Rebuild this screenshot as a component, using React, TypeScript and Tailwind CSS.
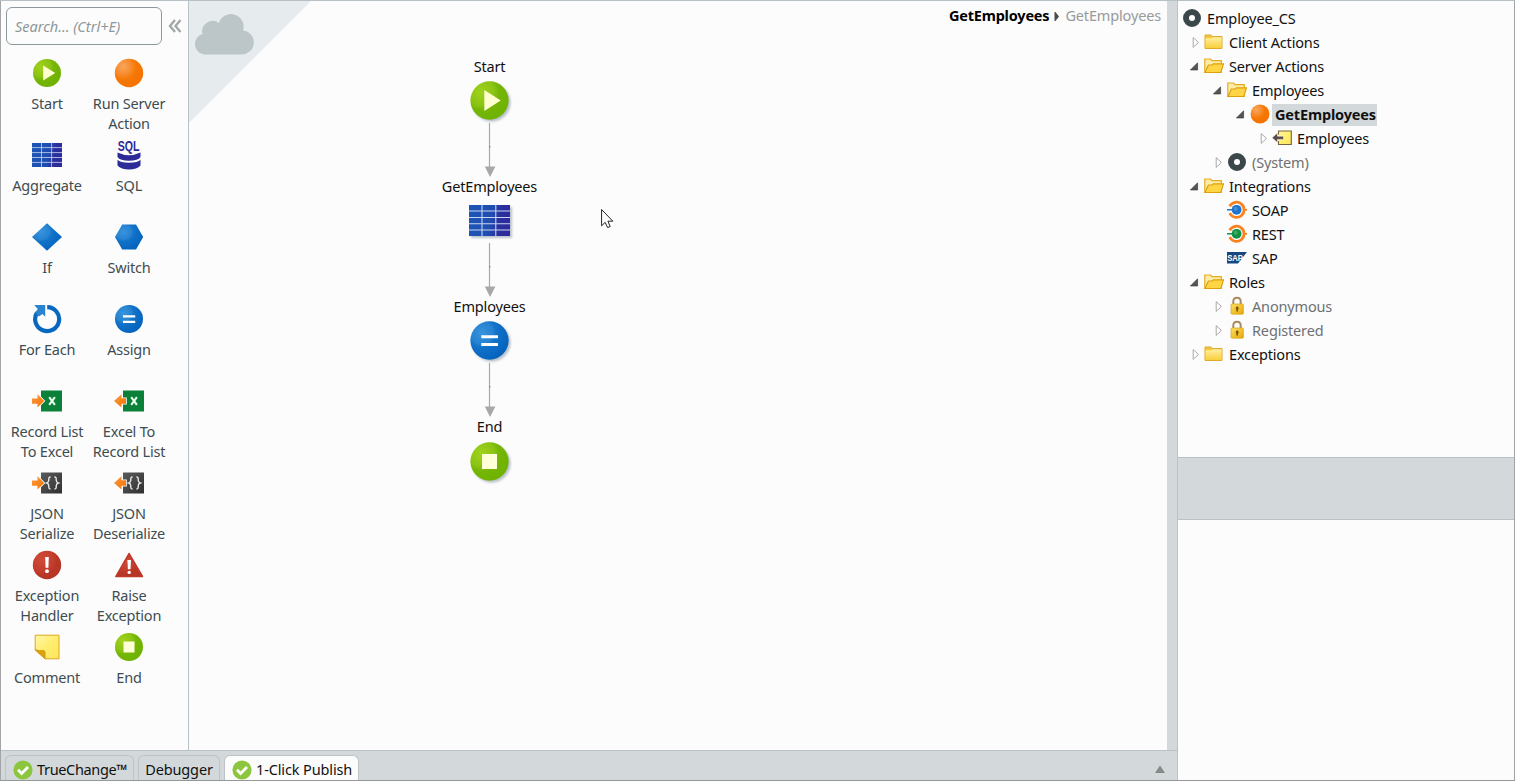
import React from "react";

type IconProps = { size?: number };

function Gradients() {
  return (
    <svg width="0" height="0" className="absolute">
      <defs>
        <radialGradient id="green" cx="0.28" cy="0.28" r="0.8">
          <stop offset="0" stopColor="#9fd21c" />
          <stop offset="0.42" stopColor="#8cc413" />
          <stop offset="0.6" stopColor="#74b505" />
          <stop offset="1" stopColor="#6fb200" />
        </radialGradient>
        <radialGradient id="orange" cx="0.3" cy="0.28" r="0.75">
          <stop offset="0" stopColor="#f9a55c" />
          <stop offset="0.35" stopColor="#f88d30" />
          <stop offset="0.62" stopColor="#f67703" />
          <stop offset="1" stopColor="#f57300" />
        </radialGradient>
        <radialGradient id="blue" cx="0.3" cy="0.3" r="0.75">
          <stop offset="0" stopColor="#3a93dc" />
          <stop offset="0.38" stopColor="#2583d2" />
          <stop offset="0.5" stopColor="#1272c8" />
          <stop offset="1" stopColor="#0463bd" />
        </radialGradient>
        <radialGradient id="red" cx="0.3" cy="0.3" r="0.8">
          <stop offset="0" stopColor="#cf4a39" />
          <stop offset="0.5" stopColor="#c43e2e" />
          <stop offset="0.7" stopColor="#b83626" />
          <stop offset="1" stopColor="#b53425" />
        </radialGradient>
        <linearGradient id="table" x1="0" y1="0" x2="1" y2="0.15">
          <stop offset="0" stopColor="#1b57b8" />
          <stop offset="0.6" stopColor="#1f4cb0" />
          <stop offset="0.8" stopColor="#2b2f9e" />
          <stop offset="1" stopColor="#2d2b9b" />
        </linearGradient>
        <linearGradient id="arrow" x1="0" y1="0" x2="1" y2="1">
          <stop offset="0" stopColor="#fb9a42" />
          <stop offset="1" stopColor="#f57200" />
        </linearGradient>
        <linearGradient id="json" x1="0" y1="0" x2="1" y2="1">
          <stop offset="0" stopColor="#5b5b5b" />
          <stop offset="1" stopColor="#303030" />
        </linearGradient>
        <linearGradient id="note" x1="0" y1="0" x2="1" y2="1">
          <stop offset="0" stopColor="#fff6a8" />
          <stop offset="0.5" stopColor="#ffee6e" />
          <stop offset="1" stopColor="#ffe45c" />
        </linearGradient>
        <linearGradient id="folder" x1="0" y1="0" x2="0" y2="1">
          <stop offset="0" stopColor="#fff0a0" />
          <stop offset="1" stopColor="#f9cf3c" />
        </linearGradient>
        <linearGradient id="lock" x1="0" y1="0" x2="1" y2="1">
          <stop offset="0" stopColor="#fde063" />
          <stop offset="1" stopColor="#e5a800" />
        </linearGradient>
      </defs>
    </svg>
  );
}

function StartIcon({ size = 30 }: IconProps) {
  return (
    <svg width={size} height={size} viewBox="0 0 30 30">
      <circle cx="15" cy="15" r="14" fill="url(#green)" />
      <path d="M11.2 7.4V22.6L23.2 15Z" fill="#ffffd0" />
    </svg>
  );
}

function EndIcon({ size = 30 }: IconProps) {
  return (
    <svg width={size} height={size} viewBox="0 0 30 30">
      <circle cx="15" cy="15" r="14" fill="url(#green)" />
      <rect x="9.5" y="9.5" width="11" height="11" fill="#ffffd8" />
    </svg>
  );
}

function BallIcon({ size = 30 }: IconProps) {
  return (
    <svg width={size} height={size} viewBox="0 0 30 30">
      <circle cx="15" cy="15" r="14.2" fill="url(#orange)" />
    </svg>
  );
}

function AssignIcon({ size = 30 }: IconProps) {
  return (
    <svg width={size} height={size} viewBox="0 0 30 30">
      <circle cx="15" cy="15" r="14" fill="url(#blue)" />
      <path d="M9 11.2H21.2V13.4H9ZM9 16.8H21.2V19H9Z" fill="#fff" />
    </svg>
  );
}

function TableIcon({ width = 30, height = 30 }: { width?: number; height?: number }) {
  return (
    <svg width={width} height={height} viewBox="0 0 30 24" preserveAspectRatio="none">
      <rect width="30" height="24" fill="url(#table)" />
      <path
        d="M9.5 0V24M19.6 0V24M0 4.6H30M0 9.6H30M0 14.5H30M0 19.4H30"
        stroke="#c9d4ee"
        strokeWidth="0.8"
      />
    </svg>
  );
}

function SqlIcon() {
  return (
    <svg className="overflow-visible" width="30" height="30" viewBox="0 0 30 30">
      <text
        x="3.8"
        y="11.2"
        fontFamily="'Liberation Sans Narrow', 'Liberation Sans', sans-serif"
        fontWeight="700"
        fontSize="15.5"
        textLength="21.5"
        lengthAdjust="spacingAndGlyphs"
        fill="#2c2b98"
      >
        SQL
      </text>
      <path d="M3.5 12.6Q15 18 26.5 12.6V17Q24 20.8 15 20.8T3.5 17Z" fill="#2c2b98" />
      <path d="M3.5 19.8Q6 22.8 15 22.8T26.5 19.8V25.5Q23 29.4 15 29.4T3.5 25.5Z" fill="#2c2b98" />
    </svg>
  );
}

function IfIcon() {
  return (
    <svg width="30" height="30" viewBox="0 0 30 30">
      <path d="M15 1.2L30 15L15 28.8L0 15Z" fill="url(#blue)" />
    </svg>
  );
}

function SwitchIcon() {
  return (
    <svg width="30" height="30" viewBox="0 0 30 30">
      <path d="M8.2 2.6H22L29.2 15L22 27.4H8.2L1 15Z" fill="url(#blue)" />
    </svg>
  );
}

function LoopIcon() {
  return (
    <svg width="30" height="30" viewBox="0 0 30 30">
      <path d="M15.2 3.1A12 12 0 1 1 5 8.7" fill="none" stroke="#0868c1" strokeWidth="4.2" />
      <path d="M2.2 1H13.2V12.8L10.4 10L7 12.5L3.2 8.6L5.8 5Z" fill="#2a83cf" />
    </svg>
  );
}

function TransferIcon({ kind, out }: { kind: "excel" | "json"; out?: boolean }) {
  return (
    <svg width="30" height="30" viewBox="0 0 30 30">
      <rect x="9" y="4.5" width="21" height="21" fill={kind === "excel" ? "#0a8038" : "url(#json)"} />
      {out ? (
        <path
          d="M0 15L7.5 8.3V12.3H12V17.8H7.5V21.6Z"
          fill="url(#arrow)"
          stroke="#fcfcfc"
          strokeWidth="1.6"
          paintOrder="stroke"
        />
      ) : (
        <path
          d="M0 12.5H5.5V8.3L12.2 15L5.5 21.6V17.8H0Z"
          fill="url(#arrow)"
          stroke="#fcfcfc"
          strokeWidth="1.6"
          paintOrder="stroke"
        />
      )}
      {kind === "excel" ? (
        <path d="M17.2 11.2L22.9 18.8M22.9 11.2L17.2 18.8" stroke="#e9fff0" strokeWidth="2.1" />
      ) : (
        <path
          d="M18.6 9C16.5 9 16.8 10.4 16.8 12C16.8 14 16.2 14.6 14.8 15C16.2 15.4 16.8 16 16.8 18C16.8 19.6 16.5 21 18.6 21M22.4 9C24.5 9 24.2 10.4 24.2 12C24.2 14 24.8 14.6 26.2 15C24.8 15.4 24.2 16 24.2 18C24.2 19.6 24.5 21 22.4 21"
          fill="none"
          stroke="#e8e8e8"
          strokeWidth="1.4"
        />
      )}
    </svg>
  );
}

function ExceptionHandlerIcon() {
  return (
    <svg width="30" height="30" viewBox="0 0 30 30">
      <circle cx="15" cy="15" r="14.2" fill="url(#red)" />
      <path d="M13.2 7H16.8L16.4 17.8H13.6Z" fill="#fff" />
      <circle cx="15" cy="21.2" r="1.9" fill="#fff" />
    </svg>
  );
}

function RaiseIcon() {
  return (
    <svg width="30" height="30" viewBox="0 0 30 30">
      <path d="M15 3.5L28.5 26.5H1.8Z" fill="url(#red)" stroke="#bd392a" strokeWidth="1.5" strokeLinejoin="round" />
      <path d="M13.4 10H17L16.5 19.2H13.9Z" fill="#fff" />
      <circle cx="15.2" cy="22.4" r="1.7" fill="#fff" />
    </svg>
  );
}

function NoteIcon() {
  return (
    <svg width="30" height="30" viewBox="0 0 30 30">
      <path d="M3.2 3.2H27V26.8H13L3.2 18Z" fill="url(#note)" stroke="#dfa71d" strokeWidth="1" />
      <path d="M3.2 17.6L13 26.8V19.6L11.6 18.4Q8 19.6 3.2 17.6Z" fill="#dda20a" stroke="#d49a10" strokeWidth="1" />
    </svg>
  );
}

function ModuleIcon() {
  return (
    <svg width="20" height="20" viewBox="0 0 20 20">
      <circle cx="10" cy="10" r="6" fill="#fff" stroke="#3b474b" strokeWidth="6" />
    </svg>
  );
}

function FolderIcon() {
  return (
    <svg width="20" height="20" viewBox="0 0 20 20">
      <path d="M1 3H7L8.5 4.5H18V16.5H1Z" fill="#f5c73f" stroke="#dfab2c" strokeWidth="1" />
      <path d="M1.6 6.2H7.6L9 5.2H17.5V16H1.6Z" fill="url(#folder)" />
    </svg>
  );
}

function OpenFolderIcon() {
  return (
    <svg width="20" height="20" viewBox="0 0 20 20">
      <path d="M0.8 16.5V3H6.5L8 4.7H17.3V16.5Z" fill="#fdebaa" stroke="#e3ad1e" strokeWidth="1.2" />
      <path d="M1 16.5L4.4 9H8.2L9.4 7.8H19.5L16.8 16.5Z" fill="#ffd546" stroke="#dca10f" strokeWidth="1.2" />
    </svg>
  );
}

function OutputIcon() {
  return (
    <svg width="20" height="20" viewBox="0 0 20 20">
      <rect x="6.5" y="3" width="13" height="13.5" fill="#ffe066" />
      <path d="M6.5 6.5V3H19.3V16.5H6.5V13" fill="url(#note)" stroke="#7a6538" strokeWidth="1.1" />
      <path d="M0 9.8L5.5 5V8.2H11.5V11.4H5.5V14.6Z" fill="#594a4c" stroke="#fff" strokeWidth="0.5" />
    </svg>
  );
}

function ServiceIcon({ color }: { color: string }) {
  return (
    <svg width="20" height="20" viewBox="0 0 20 20">
      <path d="M2.7 6.4A7.6 7.6 0 1 1 2.7 13.2" fill="none" stroke="#fa8220" strokeWidth="2.7" />
      <path d="M17 9.8H20" stroke="#fa8220" strokeWidth="1.8" />
      <path d="M0 9.8H6" stroke={color} strokeWidth="1.5" />
      <circle cx="9.6" cy="9.8" r="4.9" fill={color} />
      <circle cx="8.7" cy="8.7" r="2" fill="#fff" opacity="0.2" />
    </svg>
  );
}

function SapIcon() {
  return (
    <svg width="20" height="20" viewBox="0 0 20 20">
      <path d="M0 4H20L11 15.5H0Z" fill="#174780" />
      <text
        x="0.2"
        y="12.8"
        fontFamily="'Liberation Sans', sans-serif"
        fontWeight="700"
        fontSize="9.5"
        textLength="15.5"
        lengthAdjust="spacingAndGlyphs"
        fill="#fff"
      >
        SAP
      </text>
    </svg>
  );
}

function LockIcon() {
  return (
    <svg width="20" height="20" viewBox="0 0 20 20">
      <path d="M6.3 9V5.5Q6.3 1.7 10 1.7T13.7 5.5V9" fill="none" stroke="#a78c62" strokeWidth="2" />
      <rect x="4" y="8" width="12.4" height="10.2" rx="1" fill="url(#lock)" stroke="#d9a520" strokeWidth="0.7" />
      <path d="M10.2 10.6A1.6 1.6 0 0 1 11 13.5V15.6H9.4V13.5A1.6 1.6 0 0 1 10.2 10.6Z" fill="#7c5200" />
    </svg>
  );
}

function CheckIcon() {
  return (
    <svg width="20" height="20" viewBox="0 0 20 20">
      <circle cx="10" cy="10" r="9.6" fill="#8cc63e" />
      <path d="M5 9.8L8.6 13.4L15 7" fill="none" stroke="#fff" strokeWidth="2.8" />
    </svg>
  );
}

const tools: { icon: React.ReactNode; lines: string[] }[] = [
  { icon: <StartIcon />, lines: ["Start"] },
  { icon: <BallIcon />, lines: ["Run Server", "Action"] },
  { icon: <TableIcon height={24} />, lines: ["Aggregate"] },
  { icon: <SqlIcon />, lines: ["SQL"] },
  { icon: <IfIcon />, lines: ["If"] },
  { icon: <SwitchIcon />, lines: ["Switch"] },
  { icon: <LoopIcon />, lines: ["For Each"] },
  { icon: <AssignIcon />, lines: ["Assign"] },
  { icon: <TransferIcon kind="excel" />, lines: ["Record List", "To Excel"] },
  { icon: <TransferIcon kind="excel" out />, lines: ["Excel To", "Record List"] },
  { icon: <TransferIcon kind="json" />, lines: ["JSON", "Serialize"] },
  { icon: <TransferIcon kind="json" out />, lines: ["JSON", "Deserialize"] },
  { icon: <ExceptionHandlerIcon />, lines: ["Exception", "Handler"] },
  { icon: <RaiseIcon />, lines: ["Raise", "Exception"] },
  { icon: <NoteIcon />, lines: ["Comment"] },
  { icon: <EndIcon />, lines: ["End"] },
];

function Toolbox() {
  return (
    <aside className="flex w-[188px] shrink-0 flex-col border-r border-[#b9c2c6] pl-[5px]">
      <div className="flex items-center pt-[6px]">
        <div className="flex h-[38px] w-[156px] items-center rounded-[6px] border border-[#8d999d] pt-[2px] pl-[8px] text-[14.5px] tracking-[0px] text-[#8d9699] italic">
          Search... (Ctrl+E)
        </div>
        <svg className="ml-[6px]" width="14" height="14" viewBox="0 0 14 14">
          <path d="M7 1L2 7L7 13M12.5 1L7.5 7L12.5 13" fill="none" stroke="#a3a9ab" strokeWidth="2.4" />
        </svg>
      </div>
      <div className="mt-[13px] grid grid-cols-[82px_82px] auto-rows-[82px]">
        {tools.map((t, i) => (
          <div key={i} className="flex flex-col items-center">
            <div className="mb-[6px] flex h-[30px] items-center">{t.icon}</div>
            {t.lines.map((l) => (
              <span key={l} className="h-[20px] leading-[18px] tracking-[-0.2px] whitespace-nowrap text-[#3f4c50]">
                {l}
              </span>
            ))}
          </div>
        ))}
      </div>
    </aside>
  );
}

function Connector() {
  return (
    <svg width="20" height="54" viewBox="0 0 20 54">
      <path d="M10.5 0V45" stroke="#a7a9a9" strokeWidth="1.2" />
      <path d="M5.8 43.5H16.4L11.1 54Z" fill="#a7a9a9" />
      <rect x="10" y="23" width="1.4" height="1.4" fill="#6d8fa8" />
    </svg>
  );
}

function FlowNode({ label, icon, last }: { label: string; icon: React.ReactNode; last?: boolean }) {
  return (
    <div className="flex h-[120px] flex-col items-center">
      <span className="h-[20px] pl-px leading-[18px] tracking-[-0.18px] whitespace-nowrap">{label}</span>
      <div className="mt-[4px] flex h-[41px] items-center drop-shadow-[2px_2px_1px_rgba(90,105,130,0.4)]">{icon}</div>
      {!last && (
        <div className="mt-[2px]">
          <Connector />
        </div>
      )}
    </div>
  );
}

function Canvas() {
  return (
    <main className="relative min-w-0 flex-1">
      <svg className="absolute top-0 left-0" width="124" height="124" viewBox="0 0 124 124">
        <path d="M0 0H122L0 122Z" fill="#e6ebee" />
        <path
          d="M15 53.5A10.5 10.5 0 0 1 13.5 33A10.5 10.5 0 0 1 30 22A12.3 12.3 0 0 1 54.1 29.4A12.1 12.1 0 0 1 52 53.5Z"
          fill="#bcc5c8"
        />
      </svg>
      <div className="absolute top-[5px] right-[6px] flex h-[20px] items-center">
        <span className="h-[20px] leading-[18px] font-bold tracking-[-0.2px] text-black">GetEmployees</span>
        <svg className="mx-[5px]" width="6" height="9" viewBox="0 0 6 9">
          <path d="M0.5 0H1.5L5 4.5L1.5 9H0.5Z" fill="#4c4c4c" />
        </svg>
        <span className="h-[20px] leading-[18px] tracking-[-0.15px] text-[#979a9b]">GetEmployees</span>
      </div>
      <div className="absolute top-[56px] left-[240px] flex w-[120px] flex-col items-stretch">
        <FlowNode label="Start" icon={<StartIcon size={41} />} />
        <FlowNode label="GetEmployees" icon={<TableIcon width={41} height={31} />} />
        <FlowNode label="Employees" icon={<AssignIcon size={41} />} />
        <FlowNode label="End" icon={<EndIcon size={41} />} last />
      </div>
      <svg className="absolute top-[207px] left-[412px]" width="14" height="22" viewBox="0 0 14 22">
        <path
          d="M0.6 1.5V17.8L4.2 14.4L6.6 19.6L9.2 18.5L6.9 13.2H11.8Z"
          fill="#fff"
          stroke="#222"
          strokeWidth="1"
        />
      </svg>
    </main>
  );
}

type Row = {
  label: string;
  icon: React.ReactNode;
  pad: string;
  arrow?: "open" | "closed";
  tone?: string;
  bold?: boolean;
};

const rows: Row[] = [
  { label: "Client Actions", icon: <FolderIcon />, pad: "pl-[12px]", arrow: "closed" },
  { label: "Server Actions", icon: <OpenFolderIcon />, pad: "pl-[12px]", arrow: "open" },
  { label: "Employees", icon: <OpenFolderIcon />, pad: "pl-[35px]", arrow: "open" },
  { label: "GetEmployees", icon: <BallIcon size={20} />, pad: "pl-[58px]", arrow: "open", bold: true },
  { label: "Employees", icon: <OutputIcon />, pad: "pl-[80px]", arrow: "closed" },
  { label: "(System)", icon: <ModuleIcon />, pad: "pl-[35px]", arrow: "closed", tone: "text-[#6e7172]" },
  { label: "Integrations", icon: <OpenFolderIcon />, pad: "pl-[12px]", arrow: "open" },
  { label: "SOAP", icon: <ServiceIcon color="#1c74cf" />, pad: "pl-[35px]" },
  { label: "REST", icon: <ServiceIcon color="#109245" />, pad: "pl-[35px]" },
  { label: "SAP", icon: <SapIcon />, pad: "pl-[35px]" },
  { label: "Roles", icon: <OpenFolderIcon />, pad: "pl-[12px]", arrow: "open" },
  { label: "Anonymous", icon: <LockIcon />, pad: "pl-[35px]", arrow: "closed", tone: "text-[#6e7172]" },
  { label: "Registered", icon: <LockIcon />, pad: "pl-[35px]", arrow: "closed", tone: "text-[#6e7172]" },
  { label: "Exceptions", icon: <FolderIcon />, pad: "pl-[12px]", arrow: "closed" },
];

function TreeRow({ row }: { row: Row }) {
  return (
    <div className={`flex h-[24px] items-center ${row.pad}`}>
      <svg className="-mt-px" width="10" height="12" viewBox="0 0 10 12">
        {row.arrow === "open" && <path d="M7.6 1.8V9H0.4Z" fill="#555" stroke="#333" strokeWidth="0.6" />}
        {row.arrow === "closed" && <path d="M3.2 0.6L8.4 5.4L3.2 10.4Z" fill="#fff" stroke="#a8a8a8" strokeWidth="1" />}
      </svg>
      <span className="-mt-[2px] ml-[4px] flex w-[22px]">{row.icon}</span>
      <span
        className={`-mt-px h-[22px] px-[3px] leading-[20px] tracking-[-0.16px] whitespace-nowrap ${row.tone ?? "text-[#111]"} ${
          row.bold ? "w-[105px] bg-[#d3d8da] font-bold tracking-[-0.2px]" : ""
        }`}
      >
        {row.label}
      </span>
    </div>
  );
}

function Explorer() {
  return (
    <aside className="flex w-[338px] shrink-0 flex-col border-x border-r-[#9fa3a5] border-l-[#b9c2c6]">
      <div className="h-[456px]">
        <div className="relative -top-px ml-[150px] h-px w-[73px] bg-[#fcfcfc]" />
        <div className="mt-[4px] mb-px flex h-[24px] items-center pl-[4px]">
          <ModuleIcon />
          <span className="pt-[2px] pl-[5px]">Employee_CS</span>
        </div>
        {rows.map((r, i) => (
          <TreeRow key={i} row={r} />
        ))}
      </div>
      <div className="h-[63px] border-y border-[#b9c2c6] bg-[#d3d8da]" />
    </aside>
  );
}

function BottomBar() {
  return (
    <footer className="flex h-[30px] shrink-0 items-end border-t border-[#b9c2c6] bg-[#d3d8da] pl-[4px]">
      <div className="flex h-[25px] w-[129px] items-center rounded-t-[6px] border border-b-0 border-[#bcc4c7] pt-[3px] pl-[7px]">
        <CheckIcon />
        <span className="pl-[4px] tracking-[-0.35px] whitespace-nowrap">TrueChange™</span>
      </div>
      <div className="ml-[4px] flex h-[25px] w-[82px] items-center justify-center rounded-t-[6px] border border-b-0 border-[#bcc4c7] pt-[3px]">
        Debugger
      </div>
      <div className="ml-[4px] flex h-[25px] w-[135px] items-center rounded-t-[6px] border border-b-0 border-[#bcc4c7] bg-[#fcfcfc] pt-[3px] pl-[7px]">
        <CheckIcon />
        <span className="pl-[4px] whitespace-nowrap">1-Click Publish</span>
      </div>
      <svg className="mr-[11px] mb-[6px] ml-auto" width="12" height="9" viewBox="0 0 12 9">
        <path d="M6 0.5L11 8H1Z" fill="#858988" />
      </svg>
    </footer>
  );
}

export default function App() {
  return (
    <div className="flex h-[781px] w-[1515px] overflow-hidden border-t border-b border-t-[#b7c0c4] border-b-[#949899] bg-[#fcfcfc] font-['Noto_Sans',sans-serif] text-[14.5px] tracking-[-0.13px] text-[#111]">
      <Gradients />
      <div className="flex min-w-0 flex-1 flex-col border-l border-[#a3a5a6]">
        <div className="flex min-h-0 flex-1">
          <Toolbox />
          <Canvas />
          <div className="w-[10px] shrink-0 bg-[#d3d8da]" />
        </div>
        <BottomBar />
      </div>
      <Explorer />
    </div>
  );
}
